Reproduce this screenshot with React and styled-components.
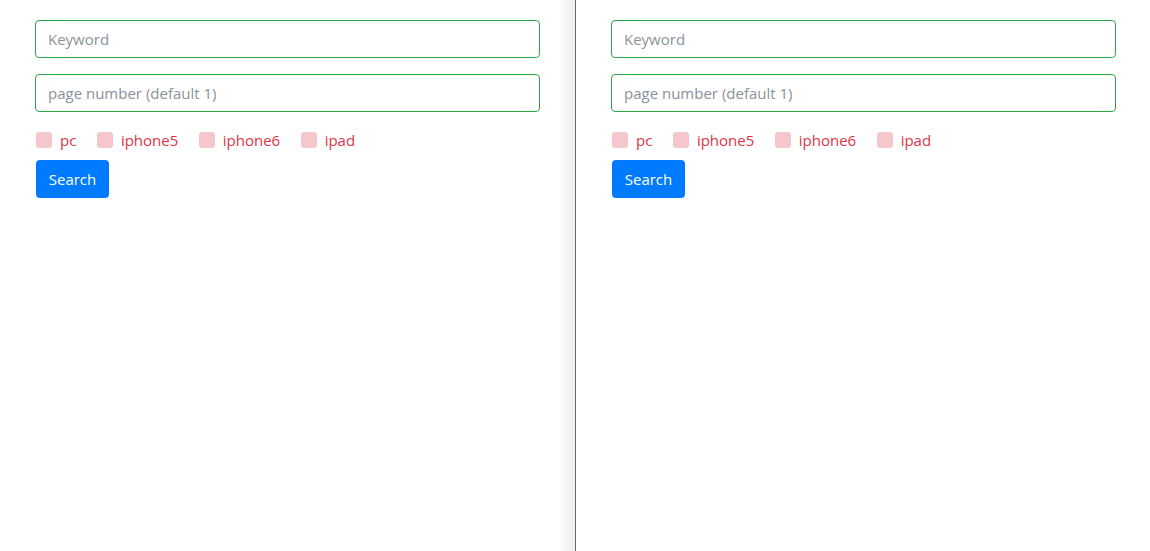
import React from "react";
import styled, { createGlobalStyle } from "styled-components";

const Global = createGlobalStyle`
  html, body, #root { height: 100%; margin: 0; }
  body { background: #fff; font-family: "Open Sans", "Noto Sans", sans-serif; }
  * { box-sizing: border-box; }
`;

const Split = styled.div`
  display: flex;
  height: 100%;
`;

const Panel = styled.div`
  flex: ${(p) => (p.$w ? `0 0 ${p.$w}px` : "1 1 auto")};
  padding: 20px ${(p) => p.$pr}px 0 35px;
  ${(p) =>
    p.$divider &&
    `
    border-right: 1px solid #6c6c6c;
    background: linear-gradient(to right, #fff calc(100% - 16px), #ececec 100%);
  `}
`;

const Stack = styled.form`
  display: flex;
  flex-direction: column;
  align-items: flex-start;
  margin: 0;
`;

const Input = styled.input`
  display: block;
  width: 100%;
  height: 38px;
  padding: 0 12px;
  border: 1px solid #28a745;
  border-radius: 4px;
  font-family: inherit;
  font-size: 15px;
  color: #495057;
  background: #fff;
  margin: 0 0 16px 0;
  outline: none;
  &::placeholder { color: #8a929a; }
`;

const Checks = styled.div`
  display: flex;
  align-items: center;
  gap: 20.5px;
  padding-left: 1px;
  margin-top: 2px;
  height: 20px;
`;

const CheckLabel = styled.label`
  display: flex;
  align-items: center;
  gap: 8px;
  color: #dc3545;
  font-size: 15px;
`;

const Box = styled.span`
  width: 16px;
  height: 16px;
  border-radius: 3px;
  background: #f5c6cb;
  display: inline-block;
`;

const Button = styled.button`
  margin-top: 10px;
  margin-left: 1px;
  width: 73px;
  height: 38px;
  border: none;
  border-radius: 4px;
  background: #007bff;
  color: #fff;
  font-family: inherit;
  font-size: 15px;
`;

const options = ["pc", "iphone5", "iphone6", "ipad"];

function Form() {
  return (
    <Stack onSubmit={(e) => e.preventDefault()}>
      <Input placeholder="Keyword" />
      <Input placeholder="page number (default 1)" />
      <Checks>
        {options.map((o) => (
          <CheckLabel key={o}>
            <Box />
            {o}
          </CheckLabel>
        ))}
      </Checks>
      <Button type="submit">Search</Button>
    </Stack>
  );
}

export default function App() {
  return (
    <>
      <Global />
      <Split>
        <Panel $w={576} $pr={35} $divider>
          <Form />
        </Panel>
        <Panel $pr={34}>
          <Form />
        </Panel>
      </Split>
    </>
  );
}
